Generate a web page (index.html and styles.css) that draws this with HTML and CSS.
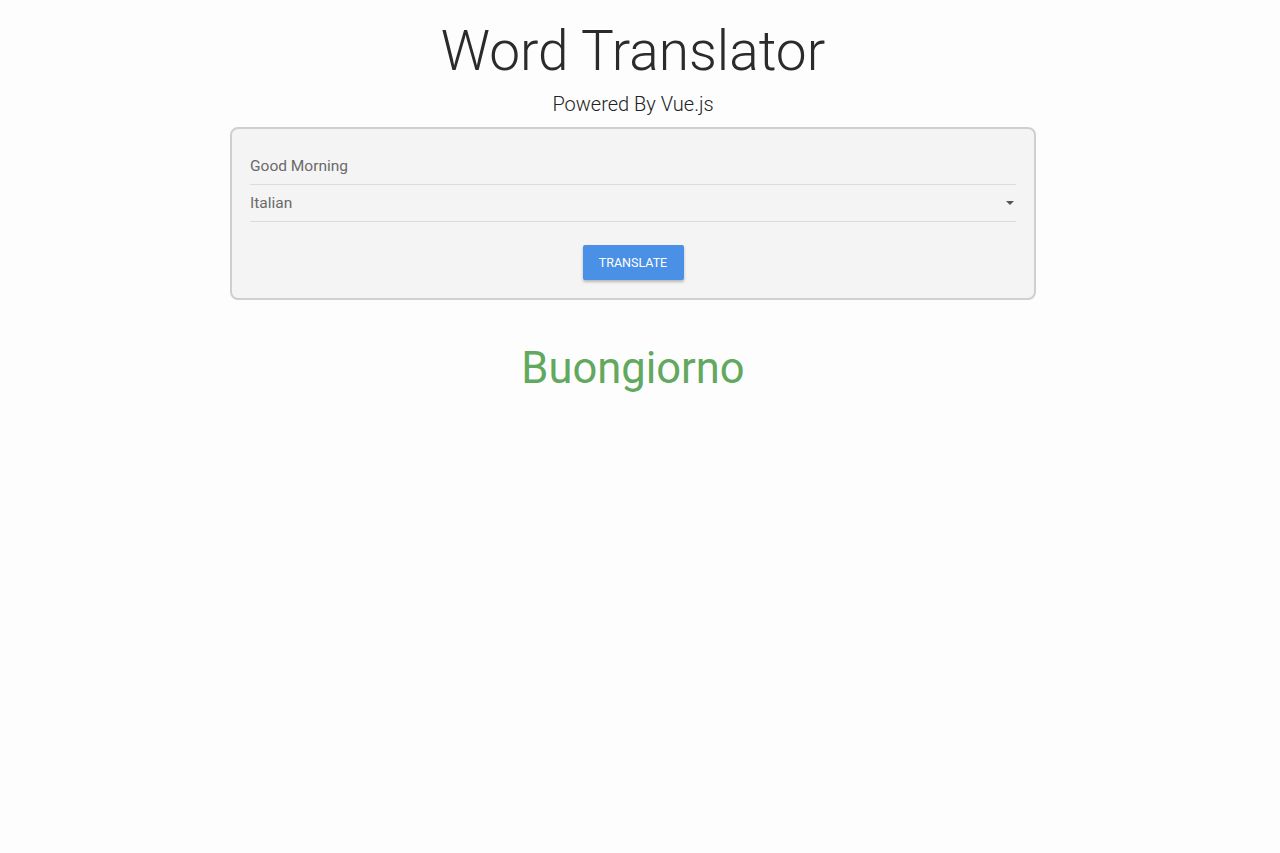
FILE: index.html
```html
<!DOCTYPE html>
<html>
<head>
<meta charset="utf-8">
<link rel="stylesheet" href="styles.css">
</head>
<body>
<div class="app">
  <h1 class="title">Word Translator</h1>
  <p class="subtitle">Powered By Vue.js</p>
  <div class="card">
    <div class="field"><span class="value">Good Morning</span></div>
    <div class="field select"><span class="value">Italian</span><span class="caret"></span></div>
    <div class="actions"><button class="btn">Translate</button></div>
  </div>
  <div class="result">Buongiorno</div>
</div>
</body>
</html>
```
FILE: styles.css
```css
html, body { margin: 0; padding: 0; background: #fdfdfd; }
body { font-family: Roboto, "Liberation Sans", sans-serif; color: #333; }
.app { display: flex; flex-direction: column; align-items: center; padding-right: 14px; }
.title { margin: 19px 0 0; font-weight: 300; font-size: 55px; line-height: 64px; color: #2b2b2b; }
.subtitle { margin: 9px 0 0; font-weight: 300; font-size: 20px; line-height: 24px; color: #222; }
.card { box-sizing: border-box; width: 806px; margin-top: 11px; background: #f4f4f4; border: 2px solid #cfcfcf; border-radius: 8px; padding: 19px 18px 18px; }
.field { display: flex; align-items: center; height: 36px; border-bottom: 1px solid #dcdcdc; font-size: 15.5px; color: #6a6a6a; }
.field .value { flex: 1; }
.caret { width: 0; height: 0; border-left: 4px solid transparent; border-right: 4px solid transparent; border-top: 4px solid #555; margin-right: 2px; }
.actions { display: flex; justify-content: center; margin-top: 23px; }
.btn { border: none; background: #4a90e6; color: #fff; font-family: Roboto, sans-serif; font-size: 12.5px; text-transform: uppercase; height: 35px; width: 101px; border-radius: 2px; box-shadow: 0 2px 3px rgba(0,0,0,0.25); padding: 0; }
.result { margin-top: 43px; font-size: 43.5px; line-height: 52px; color: #62a85f; }
```
